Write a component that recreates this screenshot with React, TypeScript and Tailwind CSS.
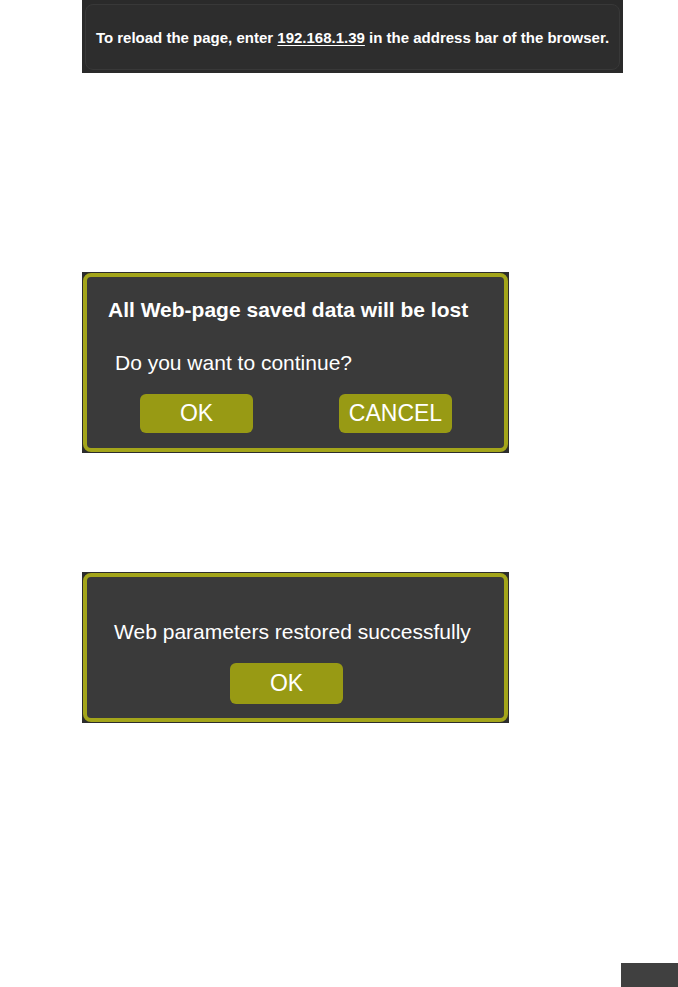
const font = { fontFamily: '"Liberation Sans", Arial, sans-serif' };

function Dialog({ children, height }: { children: React.ReactNode; height: string }) {
  return (
    <div className={`ml-[82px] w-[427px] ${height} bg-[#2c2c2c] p-px`}>
      <div className="w-full h-full rounded-[8px] border-[4px] border-[#a3a51a] bg-[#3a3a3a] flex flex-col">
        {children}
      </div>
    </div>
  );
}

function OliveButton({ label, h = 'h-[39px]' }: { label: string; h?: string }) {
  return (
    <button className={`w-[113px] ${h} rounded-[6px] bg-[#989a14] text-white text-[23px] leading-none flex items-center justify-center`}>
      {label}
    </button>
  );
}

export default function App() {
  return (
    <div className="w-[678px] h-[987px] bg-white flex flex-col" style={font}>
      {/* reload notice */}
      <div className="ml-[82px] w-[541px] h-[73px] bg-[#2a2a2a] pt-[4px] px-[3px] pb-[3px]">
        <div className="h-full rounded-[8px] border border-[#383838] bg-[#2d2d2d] flex items-center justify-center pt-[2px]">
          <p className="text-white text-[15px] font-bold">
            To reload the page, enter <span className="underline underline-offset-2">192.168.1.39</span> in the address bar of the browser.
          </p>
        </div>
      </div>

      {/* confirm dialog */}
      <div className="mt-[199px]">
        <Dialog height="h-[181px]">
          <p className="mt-[22px] ml-[21px] text-white text-[21px] leading-none font-bold">All Web-page saved data will be lost</p>
          <p className="mt-[32px] ml-[28px] text-white text-[21px] leading-none">Do you want to continue?</p>
          <div className="mt-[21px] ml-[53px] flex gap-[86px]">
            <OliveButton label="OK" />
            <OliveButton label="CANCEL" />
          </div>
        </Dialog>
      </div>

      {/* success dialog */}
      <div className="mt-[119px]">
        <Dialog height="h-[151px]">
          <p className="mt-[44px] pr-[6px] text-center text-white text-[21px] leading-none">Web parameters restored successfully</p>
          <div className="mt-[21px] ml-[143px] flex">
            <OliveButton label="OK" h="h-[41px]" />
          </div>
        </Dialog>
      </div>

      <div className="mt-[240px] ml-auto w-[57px] h-[24px] bg-[#404040]" />
    </div>
  );
}
